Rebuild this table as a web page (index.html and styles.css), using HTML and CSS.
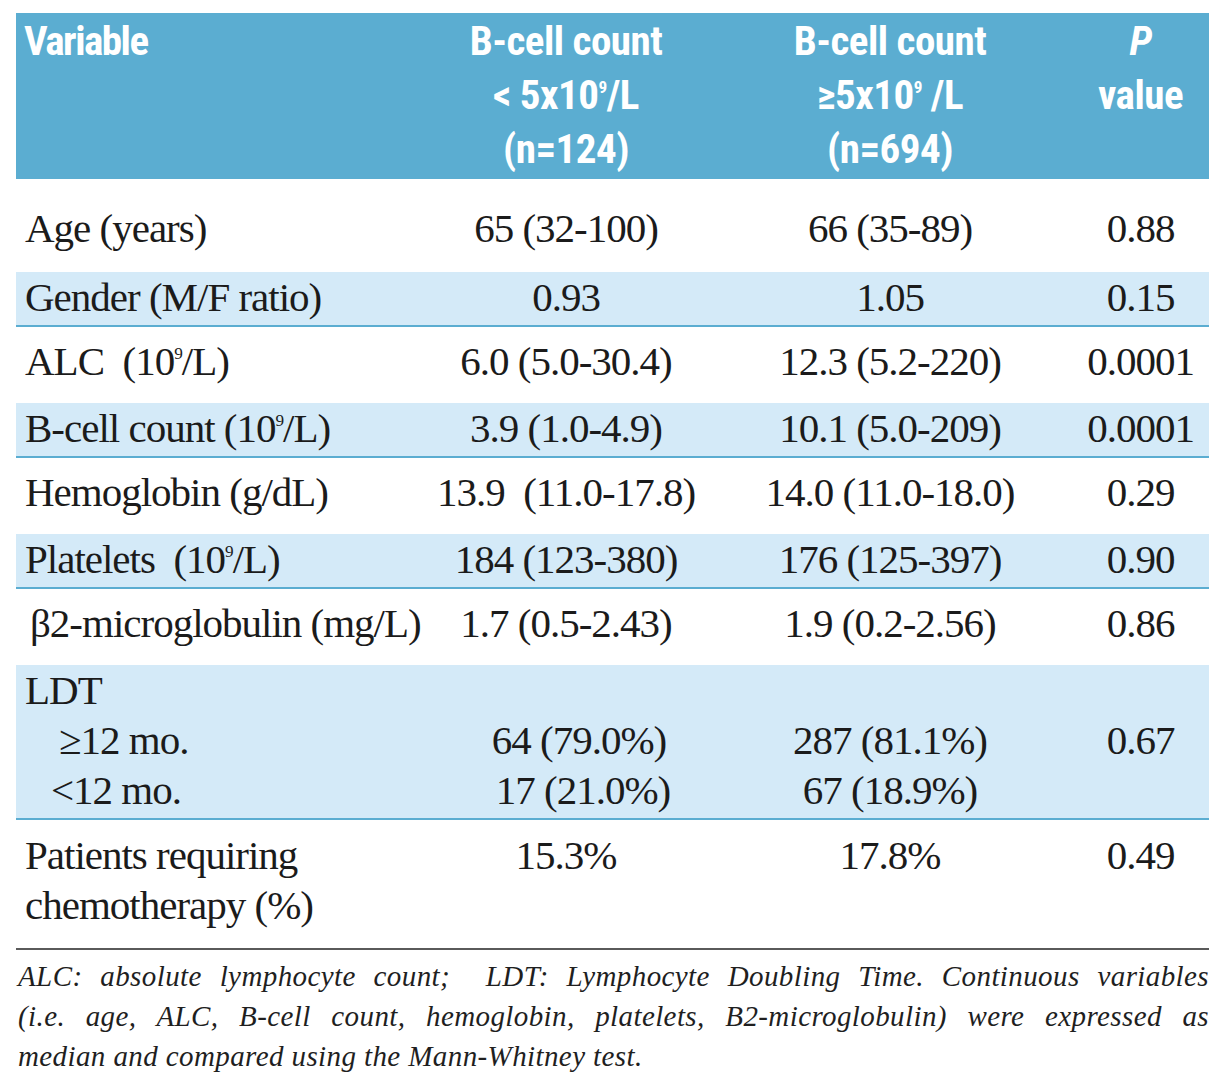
FILE: index.html
```html
<!DOCTYPE html>
<html lang="en">
<head>
<meta charset="utf-8">
<title>B-cell count comparison</title>
<link rel="stylesheet" href="styles.css">
</head>
<body>
<div class="page">
  <table class="data">
    <colgroup>
      <col class="c1"><col class="c2"><col class="c3"><col class="c4">
    </colgroup>
    <thead>
      <tr>
        <th class="var">Variable</th>
        <th>B-cell count<br>&lt; 5x10<sup>9</sup>/L<br>(n=124)</th>
        <th>B-cell count<br>≥5x10<sup>9</sup> /L<br>(n=694)</th>
        <th><i>P</i><br>value</th>
      </tr>
    </thead>
    <tbody>
      <tr class="plain first">
        <td>Age (years)</td><td>65 (32-100)</td><td>66 (35-89)</td><td>0.88</td>
      </tr>
      <tr class="shade">
        <td>Gender (M/F ratio)</td><td>0.93</td><td>1.05</td><td>0.15</td>
      </tr>
      <tr class="plain">
        <td>ALC&nbsp; (10<sup>9</sup>/L)</td><td>6.0 (5.0-30.4)</td><td>12.3 (5.2-220)</td><td>0.0001</td>
      </tr>
      <tr class="shade">
        <td>B-cell count (10<sup>9</sup>/L)</td><td>3.9 (1.0-4.9)</td><td>10.1 (5.0-209)</td><td>0.0001</td>
      </tr>
      <tr class="plain">
        <td>Hemoglobin (g/dL)</td><td>13.9&nbsp; (11.0-17.8)</td><td>14.0 (11.0-18.0)</td><td>0.29</td>
      </tr>
      <tr class="shade">
        <td>Platelets&nbsp; (10<sup>9</sup>/L)</td><td>184 (123-380)</td><td>176 (125-397)</td><td>0.90</td>
      </tr>
      <tr class="plain">
        <td class="beta">β2-microglobulin (mg/L)</td><td>1.7 (0.5-2.43)</td><td>1.9 (0.2-2.56)</td><td>0.86</td>
      </tr>
      <tr class="shade">
        <td>LDT<br><span class="ind-ge">≥12 mo.</span><br><span class="ind-lt">&lt;12 mo.</span></td>
        <td><br><span class="sh-r">64 (79.0%)</span><br><span class="sh-r2">17 (21.0%)</span></td>
        <td><br>287 (81.1%)<br>67 (18.9%)</td>
        <td><br>0.67</td>
      </tr>
      <tr class="plain last">
        <td>Patients requiring<br>chemotherapy (%)</td><td>15.3%</td><td>17.8%</td><td>0.49</td>
      </tr>
    </tbody>
  </table>
  <div class="note">
    <span class="line just">ALC: absolute lymphocyte count;&nbsp; LDT: Lymphocyte Doubling Time. Continuous variables</span>
    <span class="line just">(i.e. age, ALC, B-cell count, hemoglobin, platelets, B2-microglobulin) were expressed as</span>
    <span class="line">median and compared using the Mann-Whitney test.</span>
  </div>
</div>
</body>
</html>
```

FILE: styles.css
```css
html, body {
  margin: 0;
  padding: 0;
  background: #ffffff;
}

.page {
  padding: 13px 15px 0 16px;
  width: 1193px;
}

.data {
  width: 1193px;
  table-layout: fixed;
  border-collapse: collapse;
  border-spacing: 0;
}

.c1 { width: 408px; }
.c2 { width: 284px; }
.c3 { width: 364px; }
.c4 { width: 137px; }

.data th {
  background: #5badd1;
  color: #ffffff;
  font-family: "Liberation Sans Narrow", "Roboto Condensed", "Liberation Sans", sans-serif;
  font-weight: bold;
  font-size: 41px;
  line-height: 54px;
  letter-spacing: -0.5px;
  text-align: center;
  vertical-align: top;
  padding: 1px 0 3px 0;
  height: 162px;
  box-sizing: content-box;
}

.data th.var {
  text-align: left;
  padding-left: 8px;
  letter-spacing: -1.5px;
}

.data th sup {
  font-size: 0.42em;
  line-height: 0;
  vertical-align: 0.95em;
}

.data th i {
  font-style: italic;
}

.data td {
  font-family: "Liberation Serif", "Times New Roman", serif;
  font-size: 41px;
  line-height: 50px;
  letter-spacing: -1px;
  color: #1b1b1b;
  text-align: center;
  vertical-align: top;
  white-space: nowrap;
}

.data td:first-child {
  text-align: left;
  padding-left: 9px;
}

.data td.beta {
  padding-left: 14px;
}

.data td sup {
  font-size: 0.42em;
  line-height: 0;
  vertical-align: 0.95em;
}

.data tr.plain td {
  padding-top: 9px;
  padding-bottom: 17px;
}

.data tr.plain.first td {
  padding-top: 24px;
  padding-bottom: 19px;
}

.data tr.plain.last td {
  padding-top: 10px;
  padding-bottom: 10px;
}

.data tr.shade td {
  background: #d4eaf8;
  padding-top: 0;
  padding-bottom: 3px;
  border-bottom: 2px solid #5badd1;
}

.ind-ge {
  padding-left: 34px;
}

.ind-lt {
  padding-left: 26px;
}

.sh-r {
  padding-left: 26px;
}

.sh-r2 {
  padding-left: 34px;
}

.note {
  margin-top: 8px;
  border-top: 2px solid #5a5a5a;
  padding: 6px 0 0 2px;
  font-family: "Liberation Serif", "Times New Roman", serif;
  font-style: italic;
  font-size: 29px;
  letter-spacing: 0.4px;
  line-height: 40px;
  color: #1f1f1f;
}

.note .line {
  display: block;
  white-space: nowrap;
}

.note .line.just {
  text-align: justify;
  text-align-last: justify;
}
```
